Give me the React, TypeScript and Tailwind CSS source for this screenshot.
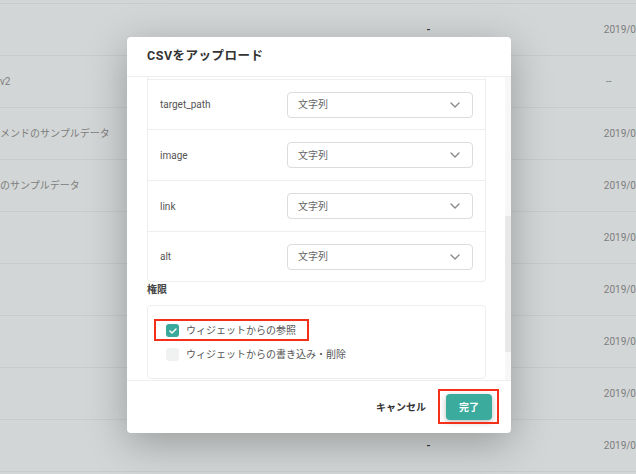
import React from "react";

const font = "font-['Roboto','Noto_Sans_CJK_JP',sans-serif]";

const tableRows = [
  { name: "", mid: "-", date: "2019/0" },
  { name: "v2", mid: "", date: "--" },
  { name: "メンドのサンプルデータ", mid: "", date: "2019/0" },
  { name: "のサンプルデータ", mid: "", date: "2019/0" },
  { name: "", mid: "", date: "2019/0" },
  { name: "", mid: "", date: "2019/0" },
  { name: "", mid: "", date: "2019/0" },
  { name: "", mid: "", date: "2019/0" },
  { name: "", mid: "-", date: "2019/0" },
];

const fields = [
  { label: "target_path", h: "h-[50px] border-b" },
  { label: "image", h: "h-[51px] border-b" },
  { label: "link", h: "h-[51px] border-b" },
  { label: "alt", h: "h-[49px]" },
];

function Chevron() {
  return (
    <svg width="10" height="6" viewBox="0 0 10 6" fill="none">
      <path d="M1 1l4 4 4-4" stroke="#8a8a8a" strokeWidth="1.4" strokeLinecap="round" strokeLinejoin="round" />
    </svg>
  );
}

function FieldRow({ label, h }: { label: string; h: string }) {
  return (
    <div className={`flex items-center border-[#eeeeee] px-3 ${h}`}>
      <div className="w-[127px] text-[10px] text-[#555]">{label}</div>
      <div className="flex h-[26px] flex-1 items-center justify-between rounded-[4px] border border-[#dcdcdc] pl-[10px] pr-[12px]">
        <span className="text-[10px] text-[#666]">文字列</span>
        <Chevron />
      </div>
    </div>
  );
}

export default function App() {
  return (
    <div className={`relative h-[474px] w-[636px] overflow-hidden bg-[#d3d6d6] ${font}`}>
      {/* table behind the overlay */}
      <div className="flex flex-col">
        <div className="h-[4px] border-b border-[#c8cbcb]" />
        {tableRows.map((r, i) => (
          <div key={i} className="flex h-[52px] items-center border-b border-[#c8cbcb] text-[10px] text-[#7c7e7e]">
            <div className="w-[428px] whitespace-nowrap">{r.name}</div>
            <div className="w-[178px] font-bold text-[#333]">{r.mid}</div>
            <div className="whitespace-nowrap">{r.date}</div>
          </div>
        ))}
      </div>

      {/* modal */}
      <div className="absolute left-[127px] top-[37px] flex h-[396px] w-[384px] flex-col overflow-hidden rounded-[4px] bg-white shadow-[0_10px_40px_rgba(0,0,0,0.28)]">
        <div className="flex h-[40px] items-center border-b border-[#eeeeee] pl-[20px] text-[12.5px] font-bold tracking-[0.5px] text-[#333]">
          CSVをアップロード
        </div>

        <div className="flex h-[303px]">
          <div className="flex-1 overflow-hidden pl-[20px] pr-[19px]">
            <div className="rounded-b-[4px] border-x border-b border-[#eeeeee]">
              <div className="h-[3px] border-b border-[#eeeeee]" />
              {fields.map((f) => (
                <FieldRow key={f.label} label={f.label} h={f.h} />
              ))}
            </div>
            <div className="flex h-[15px] items-center text-[10px] font-bold text-[#444]">権限</div>
            <div className="relative mt-[8px] flex flex-col gap-[3px] rounded-[4px] border border-[#eeeeee] pb-[13px] pl-[18px] pt-[14px]">
              <div className="absolute left-[6px] top-[13px] h-[22px] w-[155px] border-2 border-[#f4301a]" />
              <div className="flex h-[21px] items-center gap-[7px]">
                <div className="flex h-[13px] w-[13px] items-center justify-center rounded-[3px] bg-[#3aa99b]">
                  <svg width="8" height="6" viewBox="0 0 8 6" fill="none">
                    <path d="M1 3l2 2 4-4" stroke="#fff" strokeWidth="1.5" strokeLinecap="round" strokeLinejoin="round" />
                  </svg>
                </div>
                <span className="text-[10px] text-[#555]">ウィジェットからの参照</span>
              </div>
              <div className="flex h-[21px] items-center gap-[7px]">
                <div className="h-[13px] w-[13px] rounded-[3px] bg-[#f0f1f1]" />
                <span className="text-[10px] text-[#555]">ウィジェットからの書き込み・削除</span>
              </div>
            </div>
          </div>
          <div className="flex w-[6px] flex-col bg-[#f7f7f7]">
            <div className="h-[139px]" />
            <div className="h-[136px] bg-[#e8e8e8]" />
          </div>
        </div>

        <div className="flex flex-1 items-center justify-end gap-[20px] border-t border-[#eeeeee] pr-[19px]">
          <span className="text-[10px] font-bold text-[#333]">キャンセル</span>
          <div className="relative">
            <div className="absolute -bottom-[4px] -left-[8px] -right-[7px] -top-[5px] border-2 border-[#f4301a]" />
            <button className="flex h-[26px] w-[46px] items-center justify-center rounded-[4px] bg-[#3aab9c] text-[10px] font-bold text-white shadow-[0_2px_6px_rgba(0,0,0,0.25)]">
              完了
            </button>
          </div>
        </div>
      </div>
    </div>
  );
}
